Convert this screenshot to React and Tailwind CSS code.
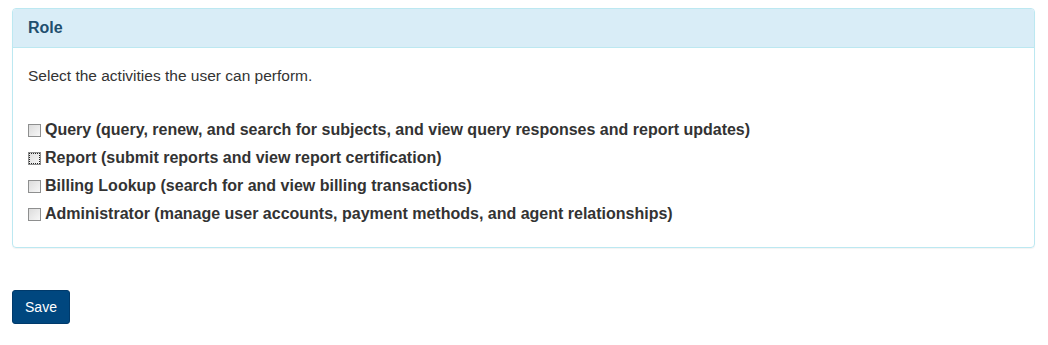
import React from "react";

const roles = [
  "Query (query, renew, and search for subjects, and view query responses and report updates)",
  "Report (submit reports and view report certification)",
  "Billing Lookup (search for and view billing transactions)",
  "Administrator (manage user accounts, payment methods, and agent relationships)",
];

const Box = ({ focused }) => (
  <span
    className={
      "inline-block w-[13px] h-[13px] shrink-0 border border-[#8e8f8f] bg-gradient-to-br from-[#dcdcdc] to-[#f7f7f7] " +
      (focused ? "outline outline-1 outline-dotted outline-[#222] -outline-offset-2" : "")
    }
  />
);

export default function App() {
  return (
    <div className="bg-white min-h-[345px] px-3 pt-2 font-['Liberation_Sans',Arial,sans-serif] text-[#333]">
      <div className="border border-[#bce8f1] rounded-[4px] w-[1023px] shadow-[0_1px_1px_rgba(0,0,0,0.05)]">
        <div className="bg-[#d9edf7] border-b border-[#bce8f1] rounded-t-[3px] h-[39px] flex items-center px-[15px]">
          <h3 className="text-[16px] font-bold text-[#1f4f6e]">Role</h3>
        </div>
        <div className="px-[15px] pt-[18px] pb-[23px]">
          <p className="text-[15.5px] leading-[20px]">Select the activities the user can perform.</p>
          <div className="mt-[34px] flex flex-col gap-[8px]">
            {roles.map((r, i) => (
              <label key={r} className="flex items-center gap-[4px] h-[20px] text-[16px] font-bold">
                <Box focused={i === 1} />
                <span>{r}</span>
              </label>
            ))}
          </div>
        </div>
      </div>
      <button className="mt-[42px] h-[34px] w-[58px] rounded-[3px] bg-[#00477f] border border-[#003a6b] text-white text-[14px]">
        Save
      </button>
    </div>
  );
}
